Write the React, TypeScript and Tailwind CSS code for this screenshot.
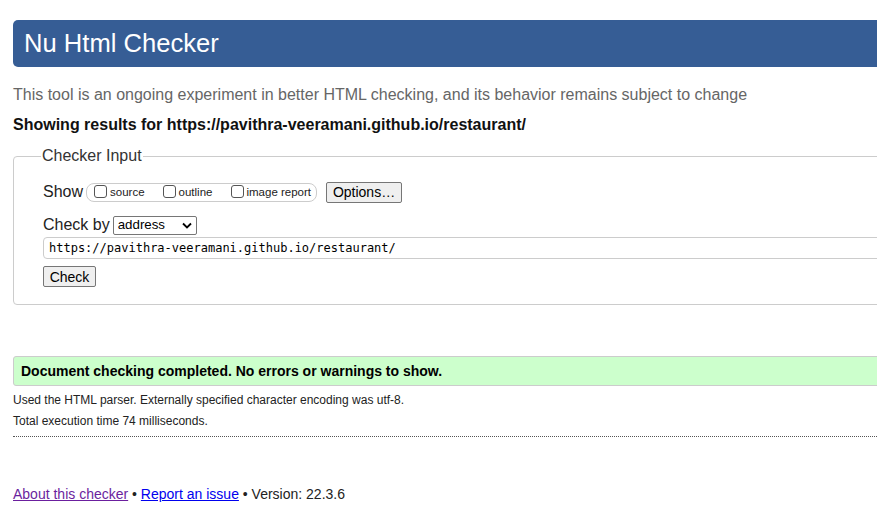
import React from "react";

export default function App() {
  return (
    <div className="w-[877px] h-[523px] overflow-hidden bg-white font-['Liberation_Sans',Arial,sans-serif] text-[#000]">
      <div className="w-[1000px] pl-[13px] pt-[20px]">
        <div className="h-[47px] bg-[#365d95] rounded-l-[5px] flex items-center pl-[11px]">
          <h1 className="text-[25.6px] text-white leading-none">Nu Html Checker</h1>
        </div>
        <p className="mt-[18px] text-[16px] text-[#666] leading-[20px]">
          This tool is an ongoing experiment in better HTML checking, and its behavior remains subject to change
        </p>
        <p className="mt-[10px] text-[16px] font-bold leading-[20px] text-[#111]">
          Showing results for https://pavithra-veeramani.github.io/restaurant/
        </p>
        <fieldset className="mt-[11px] border border-[#ccc] rounded-[4px] pl-[29px] pr-2 pb-[17px] pt-0">
          <legend className="ml-[-2px] px-[1px] text-[16px] text-[#333] leading-[20px]">Checker Input</legend>
          <div className="mt-[15px] flex items-center h-[22px]">
            <span className="text-[16px] text-[#222] leading-[20px]">Show</span>
            <div className="ml-[3px] flex items-center h-[19px] border border-[#ccc] rounded-[8px] pl-[7px] pr-[5px] text-[11.5px] text-[#222]">
              <label className="flex items-end">
                <span className="w-[13px] h-[13px] border border-[#555] rounded-[3px] mr-[3px] bg-white mb-[1px]" />
                <span className="leading-[14px]">source</span>
              </label>
              <label className="flex items-end ml-[18px]">
                <span className="w-[13px] h-[13px] border border-[#555] rounded-[3px] mr-[3px] bg-white mb-[1px]" />
                <span className="leading-[14px]">outline</span>
              </label>
              <label className="flex items-end ml-[19px]">
                <span className="w-[13px] h-[13px] border border-[#555] rounded-[3px] mr-[2px] bg-white mb-[1px]" />
                <span className="leading-[14px]">image report</span>
              </label>
            </div>
            <button className="ml-[9px] h-[21px] w-[76px] border border-[#767676] rounded-[2px] bg-[#efefef] text-[14px] text-[#000] leading-none">
              Options…
            </button>
          </div>
          <div className="mt-[12px] flex items-center h-[20px]">
            <span className="text-[16px] text-[#222] leading-[20px]">Check by</span>
            <div className="ml-[3px] w-[84px] h-[19px] border border-[#767676] rounded-[2px] flex items-center justify-between pl-[4px] pr-[4px] text-[13.3px] text-[#000]">
              <span>address</span>
              <svg width="10" height="7" viewBox="0 0 10 7">
                <path d="M1 1.5 L5 5.5 L9 1.5" fill="none" stroke="#000" strokeWidth="1.8" />
              </svg>
            </div>
          </div>
          <div className="mt-[2px] h-[22px] border border-[#ccc] rounded-[4px] flex items-center pl-[5px] font-['DejaVu_Sans_Mono',monospace] text-[12px] text-[#000]">
            https://pavithra-veeramani.github.io/restaurant/
          </div>
          <button className="mt-[7px] h-[21px] w-[53px] border border-[#767676] rounded-[2px] bg-[#efefef] text-[14px] text-[#000] leading-none flex items-center justify-center">
            Check
          </button>
        </fieldset>
        <div className="mt-[51px] h-[30px] bg-[#ccffcc] border border-[#ccc] rounded-l-[3px] flex items-center pl-[7px] text-[14px] font-bold text-[#000]">
          Document checking completed. No errors or warnings to show.
        </div>
        <p className="mt-[7px] text-[12px] text-[#222] leading-[14px]">
          Used the HTML parser. Externally specified character encoding was utf-8.
        </p>
        <p className="mt-[7px] text-[12px] text-[#222] leading-[14px]">Total execution time 74 milliseconds.</p>
        <div className="mt-[8px] border-t border-dotted border-[#555] w-[864px]" />
        <p className="mt-[49px] text-[14px] text-[#222] leading-[16px]">
          <a className="text-[#6b1f9e] underline" href="#">About this checker</a>
          {" • "}
          <a className="text-[#0000ee] underline" href="#">Report an issue</a>
          {" • Version: 22.3.6"}
        </p>
      </div>
    </div>
  );
}
